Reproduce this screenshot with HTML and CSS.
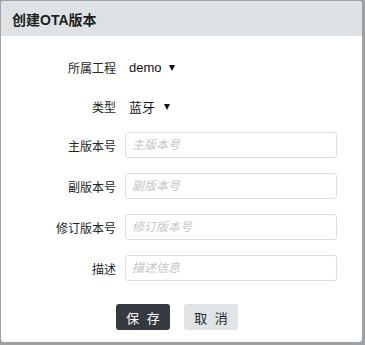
FILE: index.html
```html
<!DOCTYPE html>
<html lang="zh">
<head>
<meta charset="utf-8">
<title>创建OTA版本</title>
<link rel="stylesheet" href="styles.css">
</head>
<body>
<div class="dialog">
  <div class="dialog-header">创建OTA版本</div>
  <div class="dialog-body">
    <div class="row row-select">
      <label class="label">所属工程</label>
      <div class="select"><span>demo</span><span class="caret caret-a"></span></div>
    </div>
    <div class="row row-select">
      <label class="label">类型</label>
      <div class="select"><span>蓝牙</span><span class="caret caret-b"></span></div>
    </div>
    <div class="row">
      <label class="label">主版本号</label>
      <input class="input" type="text" placeholder="主版本号">
    </div>
    <div class="row">
      <label class="label">副版本号</label>
      <input class="input" type="text" placeholder="副版本号">
    </div>
    <div class="row">
      <label class="label">修订版本号</label>
      <input class="input" type="text" placeholder="修订版本号">
    </div>
    <div class="row">
      <label class="label">描述</label>
      <input class="input" type="text" placeholder="描述信息">
    </div>
    <div class="actions">
      <button class="btn btn-dark">保 存</button>
      <button class="btn btn-light">取 消</button>
    </div>
  </div>
</div>
</body>
</html>
```
FILE: styles.css
```css
html, body {
  margin: 0;
  padding: 0;
}
body {
  background: #9ea1a4;
  width: 365px;
  height: 345px;
  overflow: hidden;
  font-family: "Liberation Sans", "Noto Sans CJK SC", sans-serif;
  color: #212529;
}
.dialog {
  margin: 1px 0 0 1px;
  width: 361px;
  height: 341px;
  background: #fff;
  border-radius: 3px;
  overflow: hidden;
  display: flex;
  flex-direction: column;
}
.dialog-header {
  height: 35px;
  background: #dfe2e5;
  display: flex;
  align-items: center;
  padding-left: 11px;
  font-size: 14px;
  font-weight: bold;
  color: #1b1e21;
}
.dialog-body {
  padding-top: 18px;
  display: flex;
  flex-direction: column;
}
.row {
  display: flex;
  align-items: center;
  height: 26px;
  margin-bottom: 15px;
}
.row-select {
  margin-bottom: 13px;
}
.label {
  width: 115px;
  text-align: right;
  font-size: 12px;
  color: #212529;
  margin-right: 9px;
}
.select {
  display: flex;
  align-items: center;
  padding-left: 4px;
  font-size: 13px;
  color: #111;
}
.caret {
  display: inline-block;
  width: 0;
  height: 0;
  border-left: 3px solid transparent;
  border-right: 3px solid transparent;
  border-top: 6px solid #111;
  margin-top: 1px;
}
.caret-a { margin-left: 7px; }
.caret-b { margin-left: 9px; }
.input {
  box-sizing: border-box;
  width: 212px;
  height: 26px;
  border: 1px solid #dcdfe2;
  border-radius: 3px;
  padding: 0 6px;
  font-family: "Liberation Sans", "Noto Sans CJK SC", sans-serif;
  font-size: 12px;
  outline: none;
}
.input::placeholder {
  color: #c3c6c9;
  font-style: italic;
}
.actions {
  display: flex;
  gap: 14px;
  padding-left: 115px;
  margin-top: 8px;
}
.btn {
  width: 54px;
  height: 26px;
  border: none;
  border-radius: 3px;
  font-family: "Liberation Sans", "Noto Sans CJK SC", sans-serif;
  font-size: 13px;
  letter-spacing: 2px;
  padding: 0 0 0 2px;
}
.btn-dark {
  background: #343a40;
  color: #fff;
}
.btn-light {
  background: #e1e4e7;
  color: #212529;
}
```
